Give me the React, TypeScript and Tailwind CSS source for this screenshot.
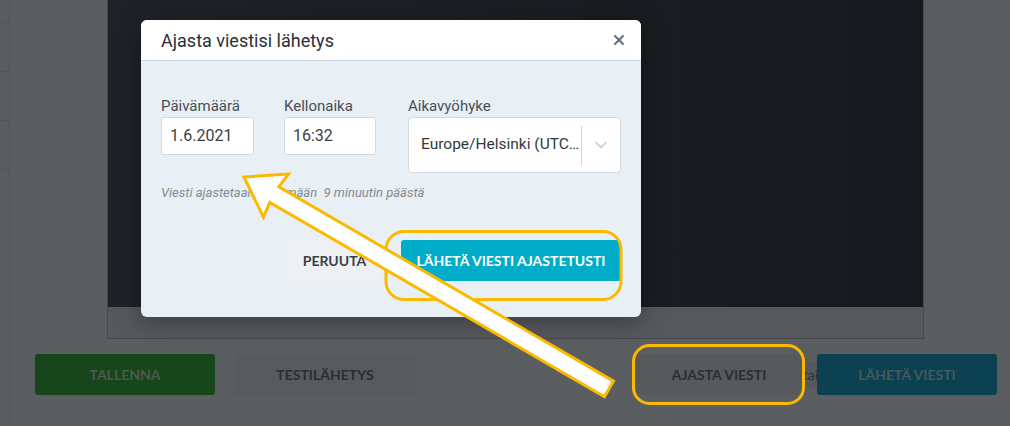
import { X, ChevronDown } from 'lucide-react';

const ubuntu = { fontFamily: 'Roboto, "Noto Sans", sans-serif' };

function Field({ label, value, width }: { label: string; value: string; width: string }) {
  return (
    <div className={`flex flex-col ${width}`}>
      <label className="h-5 text-[15px] leading-5 text-[#4a4f55]">{label}</label>
      <div className="mt-[1px] flex h-[38px] items-center rounded-[3px] border border-[#d3d9de] bg-white px-2 text-[16px] text-[#3b4046]">
        {value}
      </div>
    </div>
  );
}

export default function App() {
  return (
    <div
      className="relative flex h-[426px] w-[1010px] overflow-hidden bg-[#5a5e61]"
      style={{ fontFamily: 'Lato, "Liberation Sans", sans-serif' }}
    >
      {/* left strip */}
      <div className="flex w-[10px] shrink-0 flex-col border-r border-[#53575a] pt-[22px]">
        <div className="h-[49px] border-t border-[#525659]" />
        <div className="h-[49px] border-t border-[#525659]" />
        <div className="h-[49px] border-t border-[#525659]" />
        <div className="h-[49px] border-t border-[#525659]" />
      </div>

      {/* main */}
      <div className="flex flex-1 flex-col">
        <div className="ml-[97px] h-[339px] w-[817px] border-x border-b border-[#46494c] bg-[#56595c]">
          <div className="h-[307px] bg-gradient-to-r from-[#1f2329] to-[#16191d]" />
        </div>

        <div className="mt-[15px] flex h-[41px] items-stretch pl-[25px] pr-[13px] font-bold text-[14px]">
          <div className="flex w-[180px] items-center justify-center rounded-[3px] bg-[#17461a] text-[#4b5a4d]">
            TALLENNA
          </div>
          <div className="ml-[20px] flex w-[180px] items-center justify-center rounded-[3px] bg-[#575b5e] text-[#2b2e32]">
            TESTILÄHETYS
          </div>
          <div className="flex-1" />
          <div className="flex w-[166px] items-center justify-center rounded-[3px] bg-[#575a5d] text-[#2b2e32]">
            AJASTA VIESTI
          </div>
          <div className="relative z-0 flex w-[15px] items-center justify-center">
            <span className="ml-[6px] flex h-[28px] w-[28px] shrink-0 items-center justify-center rounded-full bg-[#55595c] pr-[4px] text-[14px] font-normal text-[#2f3236]">
              tai
            </span>
          </div>
          <div className="relative z-10 flex w-[180px] items-center justify-center rounded-[3px] bg-[#0b4150] text-[#45595f]">
            LÄHETÄ VIESTI
          </div>
        </div>
      </div>

      {/* modal */}
      <div className="absolute left-[141px] top-[20px] flex h-[297px] w-[500px] flex-col overflow-hidden rounded-md bg-[#e8eff5] shadow-[0_4px_24px_rgba(0,0,0,0.35)]">
        <div className="flex h-[41px] shrink-0 items-center justify-between border-b border-[#cdd4da] bg-white pl-5 pr-[14px]">
          <h2 className="text-[18px] text-[#2b2f34]" style={ubuntu}>
            Ajasta viestisi lähetys
          </h2>
          <X className="h-[16px] w-[16px] text-[#5c6e7e]" strokeWidth={3} />
        </div>

        <div className="flex flex-col px-5 pt-[35px]" style={ubuntu}>
          <div className="flex items-start">
            <Field label="Päivämäärä" value="1.6.2021" width="w-[93px]" />
            <div className="w-[30px]" />
            <Field label="Kellonaika" value="16:32" width="w-[92px]" />
            <div className="w-[32px]" />
            <div className="flex w-[213px] flex-col">
              <label className="h-5 text-[15px] leading-5 text-[#4a4f55]">Aikavyöhyke</label>
              <div className="mt-[1px] flex h-[56px] items-center rounded-[4px] border border-[#d3d9de] bg-white pl-3">
                <span className="flex-1 whitespace-nowrap text-[15.5px] text-[#34393e]">Europe/Helsinki (UTC…</span>
                <div className="h-[39px] w-px bg-[#cfd4d8]" />
                <div className="flex w-[38px] justify-center">
                  <ChevronDown className="h-5 w-5 text-[#c9ced2]" strokeWidth={2} />
                </div>
              </div>
            </div>
          </div>

          <p className="mt-[11px] text-[13px] italic leading-[18px] text-[#858b91]">
            Viesti ajastetaan lähtemään&nbsp; 9 minuutin päästä
          </p>

          <div className="mt-[38px] flex justify-end gap-5 text-[14px] font-bold" style={{ fontFamily: 'Lato, "Liberation Sans", sans-serif' }}>
            <button className="h-[41px] w-[93px] rounded-[3px] bg-[#eef1f4] text-[#3a3f45]">PERUUTA</button>
            <button className="h-[41px] w-[220px] rounded-[3px] bg-[#00acc8] text-white">
              LÄHETÄ VIESTI AJASTETUSTI
            </button>
          </div>
        </div>
      </div>

      {/* annotations */}
      <svg className="pointer-events-none absolute inset-0" width="1010" height="426" viewBox="0 0 1010 426">
        <rect x="386" y="231.5" width="235" height="68" rx="18" fill="none" stroke="#fbb900" strokeWidth="3" />
        <rect x="633.5" y="345.5" width="170" height="58" rx="16" fill="none" stroke="#fbb900" strokeWidth="3" />
        <g transform="translate(244 177) rotate(30.14)">
          <polygon
            points="0,0 37,-25 35,-9 422,-9 422,9 35,9 37,25"
            fill="#ffffff"
            stroke="#fbb900"
            strokeWidth="3"
            strokeLinejoin="miter"
          />
        </g>
      </svg>
    </div>
  );
}
